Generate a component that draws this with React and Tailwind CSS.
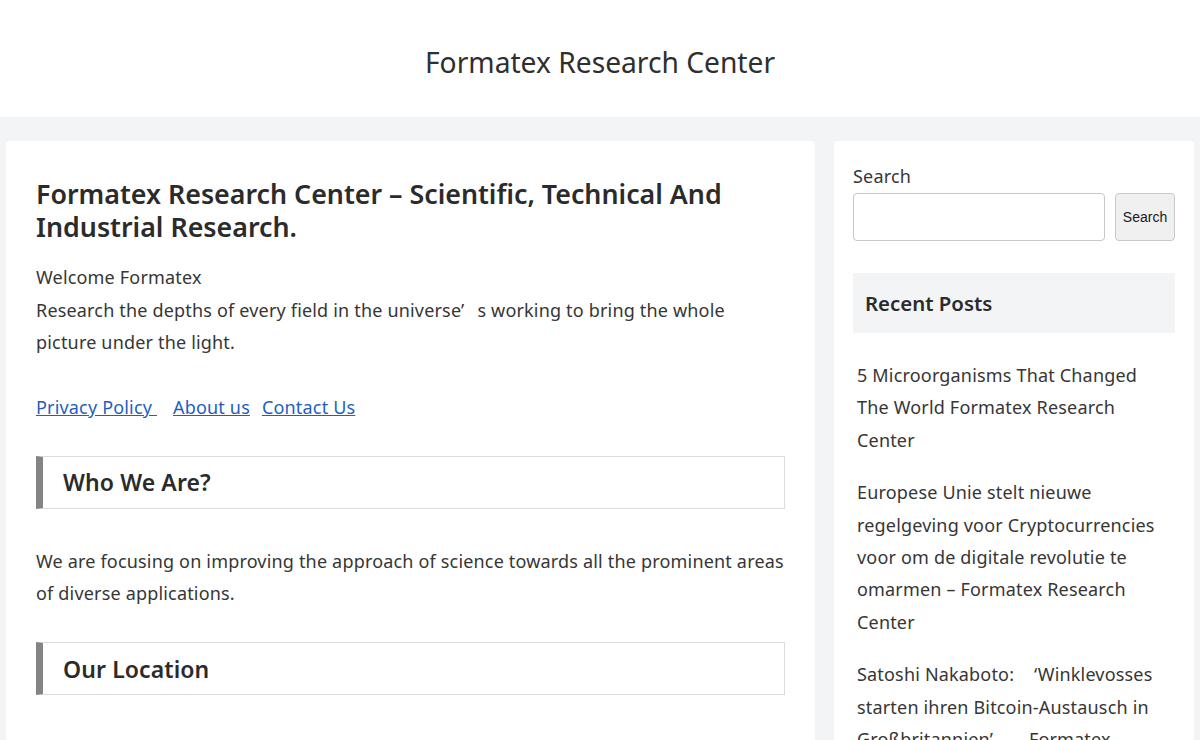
import React from "react";

const fontCls = "font-['Noto_Sans','Noto_Sans_CJK_SC',sans-serif]";

const SectionTitle = ({ children }) => (
  <h2 className="border border-[#dcdcdc] border-l-[7px] border-l-[#848484] pl-5 h-[53px] flex items-center text-[23px] tracking-[0.1px] font-semibold text-[#2b2b2b]">
    {children}
  </h2>
);

const App = () => {
  return (
    <div className={`${fontCls} h-[740px] overflow-hidden bg-[#f3f4f6] text-[18px] tracking-[0.18px] leading-[32.4px] text-[#363636]`}>
      <header className="bg-white h-[117px] flex items-center justify-center">
        <p className="text-[28.2px] tracking-normal text-[#2f2f2f] mt-[8px]">Formatex Research Center</p>
      </header>

      <div className="flex items-start gap-[19px] pt-6 pl-1.5 pr-1.5">
        {/* Main */}
        <main className="w-[809px] bg-white rounded-t-[4px] px-[30px] pt-[36px]">
          <h1 className="text-[26.8px] tracking-normal leading-[33px] font-semibold text-[#2b2b2b]">
            Formatex Research Center – Scientific, Technical And Industrial Research.
          </h1>
          <p className="mt-[18.3px]">
            Welcome Formatex
            <br />
            Research the depths of every field in the universe’<span className="pl-[13px]">s</span> working to bring the whole picture under the light.
          </p>
          <p className="mt-[32.7px] text-[#1e5fbf] flex">
            <a href="#" className="underline whitespace-pre">Privacy Policy </a>
            <a href="#" className="underline ml-4">About us</a>
            <a href="#" className="underline ml-3">Contact Us</a>
          </p>
          <div className="mt-[32px]">
            <SectionTitle>Who We Are?</SectionTitle>
          </div>
          <p className="mt-9">
            We are focusing on improving the approach of science towards all the prominent areas of diverse applications.
          </p>
          <div className="mt-[33px]">
            <SectionTitle>Our Location</SectionTitle>
          </div>
          <div className="h-24" />
        </main>

        {/* Sidebar */}
        <aside className="w-[360px] bg-white rounded-t-[4px] pl-[19px] pr-[19px] pt-[19px]">
          <label className="block leading-[33px]">Search</label>
          <div className="flex gap-[10px]">
            <input className="w-[252px] h-12 bg-white border border-[#c8c8c8] rounded-[4px]" />
            <button className="w-[60px] h-12 bg-[#f0f0f0] border border-[#c8c8c8] rounded-[4px] text-[14px] tracking-normal text-[#1a1a1a] font-['Liberation_Sans',sans-serif]">
              Search
            </button>
          </div>
          <h2 className="mt-8 bg-[#f3f4f6] h-[60px] flex items-center pl-3 pt-[1px] text-[20.4px] tracking-normal font-semibold text-[#2b2b2b]">
            Recent Posts
          </h2>
          <ul className="mt-[26px] px-1 flex flex-col gap-[20px]">
            <li>5 Microorganisms That Changed The World Formatex Research Center</li>
            <li>Europese Unie stelt nieuwe regelgeving voor Cryptocurrencies voor om de digitale revolutie te omarmen – Formatex Research Center</li>
            <li>
              Satoshi Nakaboto: <span className="pl-[15px]">‘Winklevosses</span> starten ihren Bitcoin-Austausch in Großbritannien’ <span className="pl-[31px]">Formatex</span> Research Center
            </li>
          </ul>
        </aside>
      </div>
    </div>
  );
};

export default App;
